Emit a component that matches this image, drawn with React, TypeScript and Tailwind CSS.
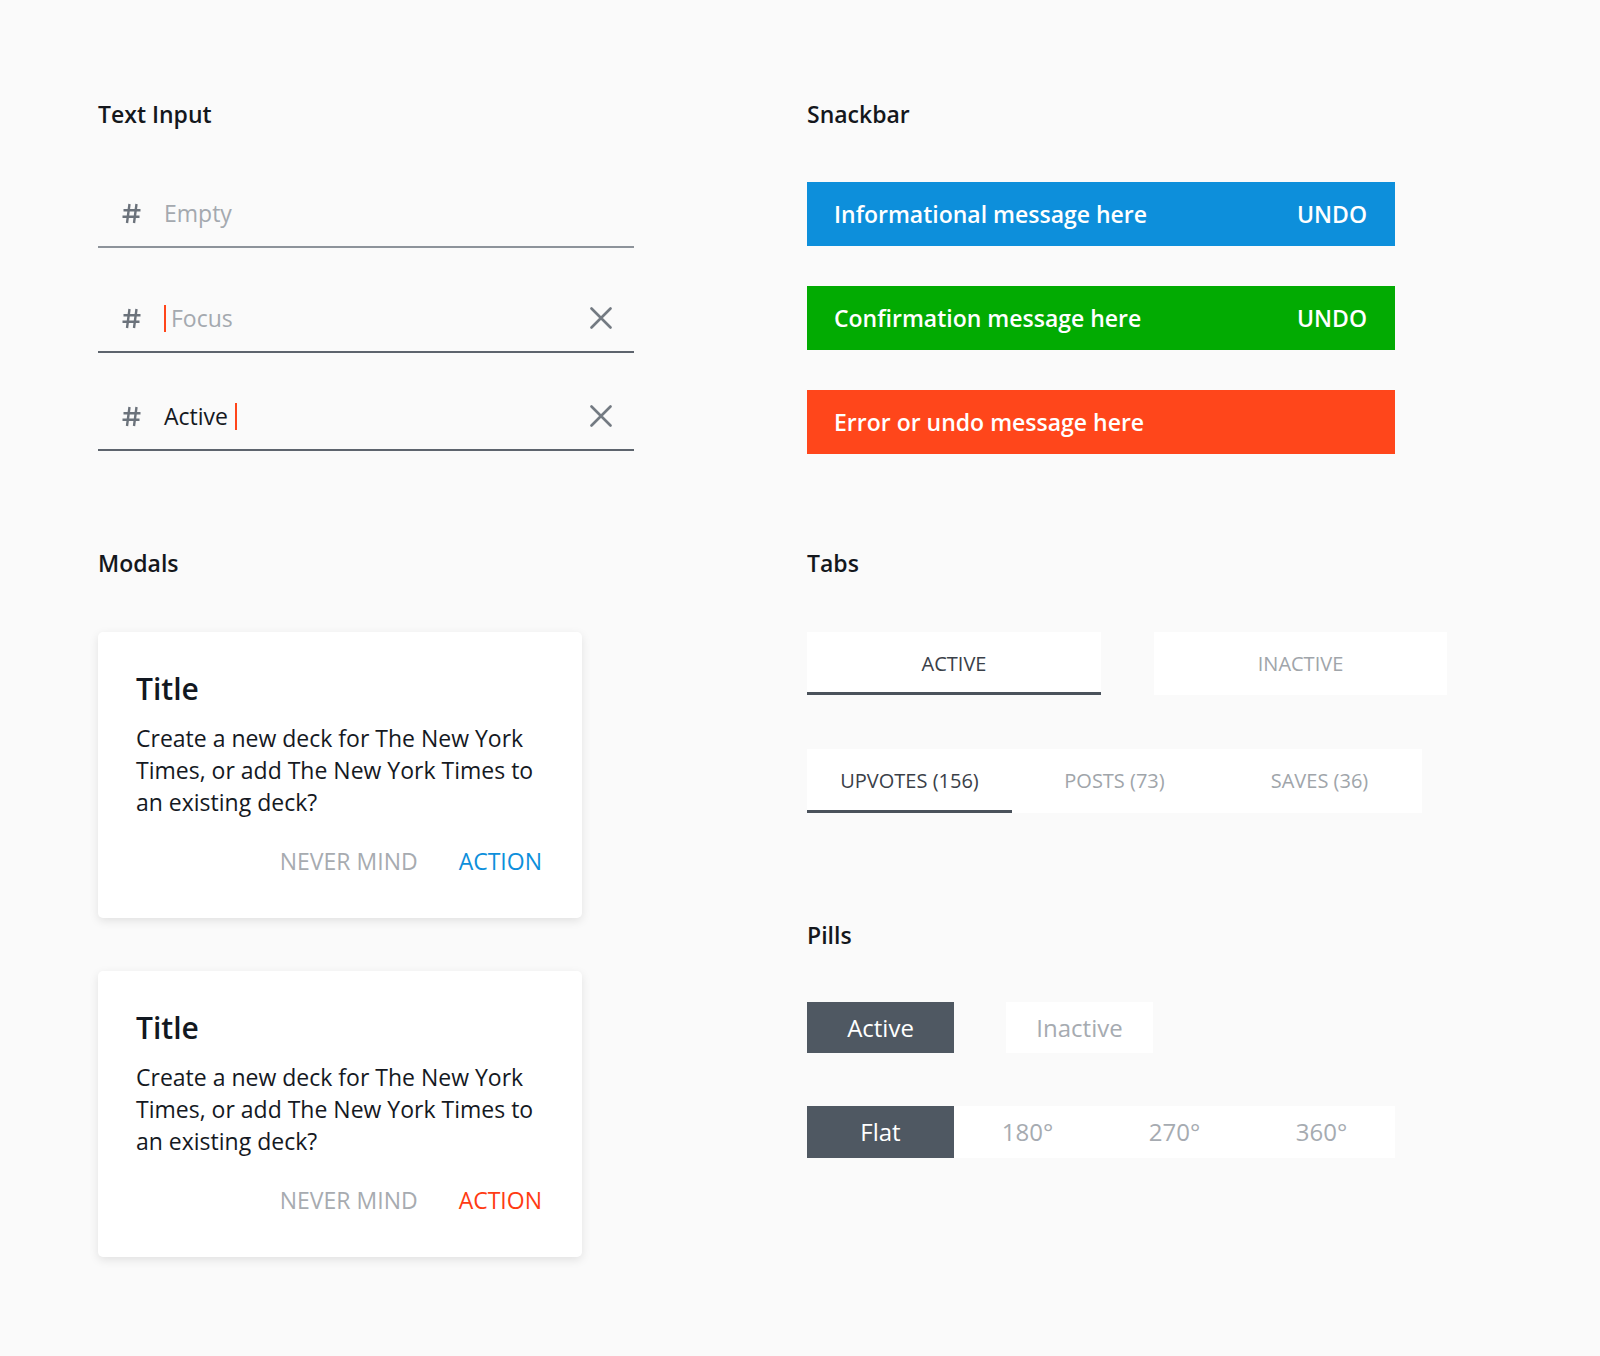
import React from 'react';

const font = { fontFamily: '"Open Sans", "Noto Sans", sans-serif' };

function Heading({ children }: { children: React.ReactNode }) {
  return <h2 className="text-[23px] leading-[30px] font-semibold text-[#14171c]">{children}</h2>;
}

function HashIcon() {
  return (
    <svg width="21" height="21" viewBox="0 0 21 21" className="shrink-0">
      <path d="M8.5 1 6 20M15.5 1 13 20M2.5 7.2H19.5M1.5 13.8H18.5" stroke="#6b727b" strokeWidth="2.4" />
    </svg>
  );
}

function ClearIcon() {
  return (
    <svg width="22" height="22" viewBox="0 0 22 22" className="shrink-0">
      <path d="M1.5 1.5 20.5 20.5M20.5 1.5 1.5 20.5" stroke="#737a82" strokeWidth="2.6" strokeLinecap="round" />
    </svg>
  );
}

function Caret() {
  return <span className="inline-block w-[2px] h-[27px] bg-[#ff451a]" />;
}

type InputProps = { state: 'empty' | 'focus' | 'active'; className?: string };

function TextField({ state, className = '' }: InputProps) {
  const border = state === 'empty' ? 'border-[#8d939a]' : 'border-[#5d646d]';
  return (
    <div className={`flex items-center h-[66px] pb-[2px] border-b-2 ${border} pl-[23px] pr-[22px] ${className}`}>
      <span className="w-[43px] flex">
        <HashIcon />
      </span>
      <div className="flex-1 flex items-center text-[23px] leading-[32px]">
        {state === 'empty' && <span className="text-[#a4a9af]">Empty</span>}
        {state === 'focus' && (
          <>
            <Caret />
            <span className="ml-[5px] text-[#a4a9af]">Focus</span>
          </>
        )}
        {state === 'active' && (
          <>
            <span className="text-[#15191f]">Active</span>
            <span className="ml-[7px] flex"><Caret /></span>
          </>
        )}
      </div>
      {state !== 'empty' && <ClearIcon />}
    </div>
  );
}

function Snackbar({ color, text, action, className = '' }: { color: string; text: string; action?: string; className?: string }) {
  return (
    <div className={`flex items-center justify-between h-[64px] pl-[27px] pr-[28px] text-white text-[23px] font-semibold ${color} ${className}`}>
      <span>{text}</span>
      {action && <span>{action}</span>}
    </div>
  );
}

function Modal({ actionColor, className = '' }: { actionColor: string; className?: string }) {
  return (
    <div className={`w-[484px] bg-white rounded-[5px] shadow-[0_3px_10px_rgba(0,0,0,0.10)] pt-[37px] pb-[41px] pl-[38px] pr-[40px] ${className}`}>
      <div className="text-[30px] leading-[40px] font-semibold text-[#121821]">Title</div>
      <p className="mt-[13px] text-[23px] leading-[32px] text-[#15191f]">
        Create a new deck for The New York Times, or add The New York Times to an existing deck?
      </p>
      <div className="mt-[27px] flex justify-end gap-[41px] text-[23px] leading-[32px]">
        <span className="text-[#a7abb0]">NEVER MIND</span>
        <span className={actionColor}>ACTION</span>
      </div>
    </div>
  );
}

const activeTab = 'bg-white shadow-[inset_0_-3px_0_#4a525b] flex items-center justify-center text-[#3a4048]';
const idleTab = 'bg-white flex items-center justify-center text-[#a0a5aa]';

export default function App() {
  return (
    <div style={font} className="min-h-[1356px] bg-[#fafafa] pt-[99px] pl-[98px]">
      <div className="grid grid-cols-[536px_640px] gap-x-[173px] gap-y-[94px]">
        <section>
          <Heading>Text Input</Heading>
          <TextField state="empty" className="mt-[53px]" />
          <TextField state="focus" className="mt-[39px]" />
          <TextField state="active" className="mt-[32px]" />
        </section>

        <section>
          <Heading>Snackbar</Heading>
          <div className="w-[588px]">
            <Snackbar color="bg-[#0d8fdb]" text="Informational message here" action="UNDO" className="mt-[53px]" />
            <Snackbar color="bg-[#02ab02]" text="Confirmation message here" action="UNDO" className="mt-[40px]" />
            <Snackbar color="bg-[#ff461b]" text="Error or undo message here" className="mt-[40px]" />
          </div>
        </section>

        <section>
          <Heading>Modals</Heading>
          <Modal actionColor="text-[#0d8fdb]" className="mt-[54px]" />
          <Modal actionColor="text-[#ff3b13]" className="mt-[53px]" />
        </section>

        <section>
          <Heading>Tabs</Heading>
          <div className="mt-[54px] flex gap-[53px] text-[20px]">
            <div className={`w-[294px] h-[63px] ${activeTab}`}>ACTIVE</div>
            <div className={`w-[293px] h-[63px] ${idleTab}`}>INACTIVE</div>
          </div>
          <div className="mt-[54px] w-[615px] h-[64px] bg-white flex text-[20px]">
            <div className={`w-[205px] ${activeTab}`}>UPVOTES (156)</div>
            <div className={`w-[205px] ${idleTab}`}>POSTS (73)</div>
            <div className={`w-[205px] ${idleTab}`}>SAVES (36)</div>
          </div>

          <div className="mt-[107px]">
            <Heading>Pills</Heading>
          </div>
          <div className="mt-[52px] flex gap-[52px] text-[24px]">
            <div className="w-[147px] h-[51px] bg-[#4f5862] text-white flex items-center justify-center">Active</div>
            <div className="w-[147px] h-[51px] bg-white text-[#a6abb1] flex items-center justify-center">Inactive</div>
          </div>
          <div className="mt-[53px] w-[588px] h-[52px] bg-white flex text-[24px]">
            <div className="w-[147px] bg-[#4f5862] text-white flex items-center justify-center">Flat</div>
            <div className="w-[147px] text-[#a6abb1] flex items-center justify-center">180°</div>
            <div className="w-[147px] text-[#a6abb1] flex items-center justify-center">270°</div>
            <div className="w-[147px] text-[#a6abb1] flex items-center justify-center">360°</div>
          </div>
        </section>
      </div>
    </div>
  );
}
